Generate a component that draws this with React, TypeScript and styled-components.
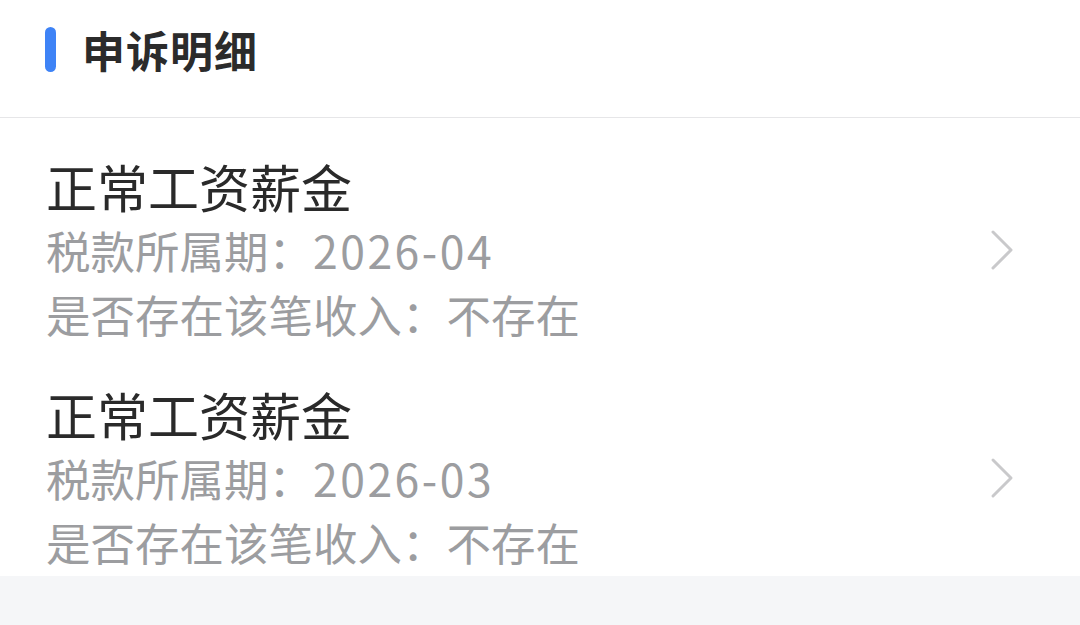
import * as React from 'react';
import styled, { createGlobalStyle } from 'styled-components';

const GlobalStyle = createGlobalStyle`
	html, body {
		margin: 0;
		padding: 0;
		background: #f5f6f8;
	}
	body {
		font-family: "Noto Sans CJK SC", "Noto Sans", sans-serif;
	}
`;

const Page = styled.div`
	width: 1080px;
	height: 625px;
	background: #f5f6f8;
	overflow: hidden;
`;

const Card = styled.div`
	background: #ffffff;
	padding-bottom: 2px;
`;

const Header = styled.div`
	height: 117px;
	display: flex;
	align-items: center;
	padding-left: 45px;
	border-bottom: 1px solid #e6e6e8;
	box-sizing: content-box;
`;

const Marker = styled.span`
	width: 11px;
	height: 45px;
	border-radius: 6px;
	background: #3e83f6;
	margin-right: 26px;
	margin-top: -18px;
`;

const Title = styled.h2`
	margin: 0;
	margin-top: -20px;
	font-size: 43px;
	font-weight: 700;
	color: #2b2b2b;
	letter-spacing: 1px;
`;

const Item = styled.div`
	padding: 36px 64px 0 46px;
`;

const Row = styled.div`
	display: flex;
	align-items: center;
	justify-content: space-between;
`;

const Lines = styled.div`
	display: flex;
	flex-direction: column;
`;

const Name = styled.div`
	font-size: 51px;
	line-height: 64px;
	color: #2a2a2a;
`;

const Meta = styled.div`
	font-size: 44.5px;
	line-height: 64px;
	color: #9c9da0;
`;

const Num = styled.span`
	letter-spacing: 2.5px;
`;

const Chevron = () => (
	<svg width="26" height="42" viewBox="0 0 26 42" fill="none">
		<path d="M3 3 L21 21 L3 39" stroke="#c9c9cb" strokeWidth="3" strokeLinecap="round" strokeLinejoin="round" />
	</svg>
);

const records = [
	{ name: '正常工资薪金', period: '2026-04', exists: '不存在' },
	{ name: '正常工资薪金', period: '2026-03', exists: '不存在' },
];

export default function App() {
	return (
		<Page>
			<GlobalStyle />
			<Card>
				<Header>
					<Marker />
					<Title>申诉明细</Title>
				</Header>
				{records.map((r, i) => (
					<Item key={i}>
						<Row>
							<Lines>
								<Name>{r.name}</Name>
								<Meta>税款所属期：<Num>{r.period}</Num></Meta>
								<Meta>是否存在该笔收入：{r.exists}</Meta>
							</Lines>
							<Chevron />
						</Row>
					</Item>
				))}
			</Card>
		</Page>
	);
}
